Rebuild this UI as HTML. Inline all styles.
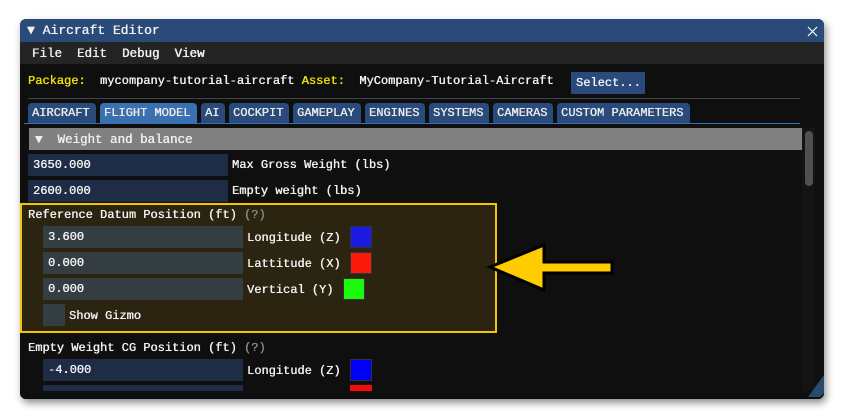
<!DOCTYPE html>
<html><head><style>
*{margin:0;padding:0;box-sizing:border-box}
body{width:844px;height:419px;background:#fff;position:relative;overflow:hidden;font-family:"Liberation Mono",monospace;font-size:12px;color:#f0f0f0}
.a{position:absolute}
.win{left:20px;top:19px;width:804px;height:380px;background:#0f0f0f;border-radius:6px;box-shadow:2px 4px 8px rgba(0,0,0,.45);overflow:hidden}
.t,.in,.tab{text-shadow:0 0 0.4px currentColor,0.3px 0 0 currentColor}
.t{white-space:pre;line-height:14px}
.tab{position:absolute;top:103px;height:20px;background:#294a7a;border-radius:4px 4px 0 0;color:#e8e8e8;line-height:21px;padding-left:4px;font-size:12px}
.in{position:absolute;height:22px;line-height:22px;padding-left:5px;white-space:pre}
</style></head><body>
<div class="a win"></div>
<div class="a" style="left:20px;top:19px;width:804px;height:23px;background:#2a4a7a;border-radius:6px 6px 0 0"></div>
<div class="a t" style="left:27px;top:24px;font-size:13px">▼ Aircraft Editor</div>
<svg class="a" style="left:807px;top:26px" width="11" height="11"><path d="M1 1L10 10M10 1L1 10" stroke="#fff" stroke-width="1.2"/></svg>
<div class="a" style="left:20px;top:42px;width:804px;height:22px;background:#242424"></div>
<div class="a t" style="left:32px;top:47px;font-size:12.5px">File  Edit  Debug  View</div>
<div class="a t" style="left:28px;top:74px"><span style="color:#f0e000">Package:</span>  mycompany-tutorial-aircraft <span style="color:#f0e000">Asset:</span>  MyCompany-Tutorial-Aircraft</div>
<div class="a t" style="left:571px;top:72px;width:74px;height:22px;background:#294a7a;line-height:22px;padding-left:5px">Select...</div>
<div class="a" style="left:28px;top:98px;width:772px;height:1px;background:#444"></div>
<div class="tab" style="left:28px;width:68px">AIRCRAFT</div>
<div class="tab" style="left:100px;width:97px;background:#3a6fb0">FLIGHT MODEL</div>
<div class="tab" style="left:201px;width:24px">AI</div>
<div class="tab" style="left:229px;width:60px">COCKPIT</div>
<div class="tab" style="left:293px;width:68px">GAMEPLAY</div>
<div class="tab" style="left:365px;width:60px">ENGINES</div>
<div class="tab" style="left:429px;width:60px">SYSTEMS</div>
<div class="tab" style="left:493px;width:60px">CAMERAS</div>
<div class="tab" style="left:557px;width:133px">CUSTOM PARAMETERS</div>
<div class="a" style="left:24px;top:123px;width:776px;height:1px;background:#3a6fb0"></div>
<div class="a" style="left:29px;top:128px;width:773px;height:22px;background:#808080"></div>
<div class="a t" style="left:35px;top:133px;color:#eee;font-size:12.5px">▼  Weight and balance</div>
<div class="a" style="left:802px;top:128px;width:13px;height:263px;background:#141414"></div>
<div class="a" style="left:805px;top:131px;width:8px;height:55px;background:#4f4f4f;border-radius:4px"></div>
<div class="in" style="left:28px;top:154px;width:200px;background:#1f2c46">3650.000</div>
<div class="a t" style="left:232px;top:158px">Max Gross Weight (lbs)</div>
<div class="in" style="left:28px;top:180px;width:200px;background:#1f2c46">2600.000</div>
<div class="a t" style="left:232px;top:184px">Empty weight (lbs)</div>
<div class="a" style="left:20px;top:203px;width:477px;height:130px;background:#2a2411;border:2px solid #f5c400"></div>
<div class="a t" style="left:28px;top:208px">Reference Datum Position (ft) <span style="color:#888">(?)</span></div>
<div class="in" style="left:43px;top:226px;width:200px;background:#343e42">3.600</div>
<div class="a t" style="left:247px;top:231px">Longitude (Z)</div>
<div class="a" style="left:350px;top:226px;width:22px;height:22px;background:#1a1ae0;border:1px solid #333"></div>
<div class="in" style="left:43px;top:252px;width:200px;background:#343e42">0.000</div>
<div class="a t" style="left:247px;top:257px">Lattitude (X)</div>
<div class="a" style="left:350px;top:252px;width:22px;height:22px;background:#fa1a0a;border:1px solid #333"></div>
<div class="in" style="left:43px;top:278px;width:200px;background:#343e42">0.000</div>
<div class="a t" style="left:247px;top:283px">Vertical (Y)</div>
<div class="a" style="left:343px;top:278px;width:22px;height:22px;background:#1afa0a;border:1px solid #333"></div>
<div class="a" style="left:43px;top:304px;width:22px;height:22px;background:#343e42"></div>
<div class="a t" style="left:69px;top:309px">Show Gizmo</div>
<div class="a t" style="left:28px;top:341px">Empty Weight CG Position (ft) <span style="color:#888">(?)</span></div>
<div class="in" style="left:43px;top:359px;width:200px;background:#1f2c46">-4.000</div>
<div class="a t" style="left:247px;top:364px">Longitude (Z)</div>
<div class="a" style="left:350px;top:359px;width:22px;height:22px;background:#0000f5;border:1px solid #333"></div>
<div class="a" style="left:43px;top:385px;width:200px;height:6px;background:#1f2c46"></div>
<div class="a" style="left:350px;top:385px;width:22px;height:6px;background:#f50a0a"></div>
<div class="a" style="left:20px;top:391px;width:804px;height:8px;background:#0f0f0f;border-radius:0 0 6px 6px"></div>
<svg class="a" style="left:808px;top:375px" width="16" height="24"><path d="M16 0V18L12 22H0Z" fill="#2a4a6e"/></svg>
<svg class="a" style="left:484px;top:238px" width="134" height="60"><path d="M6 29L60 7V24H128V35H60V52Z" fill="#ffcc00" stroke="#000" stroke-width="3" stroke-linejoin="miter"/></svg>
</body></html>
